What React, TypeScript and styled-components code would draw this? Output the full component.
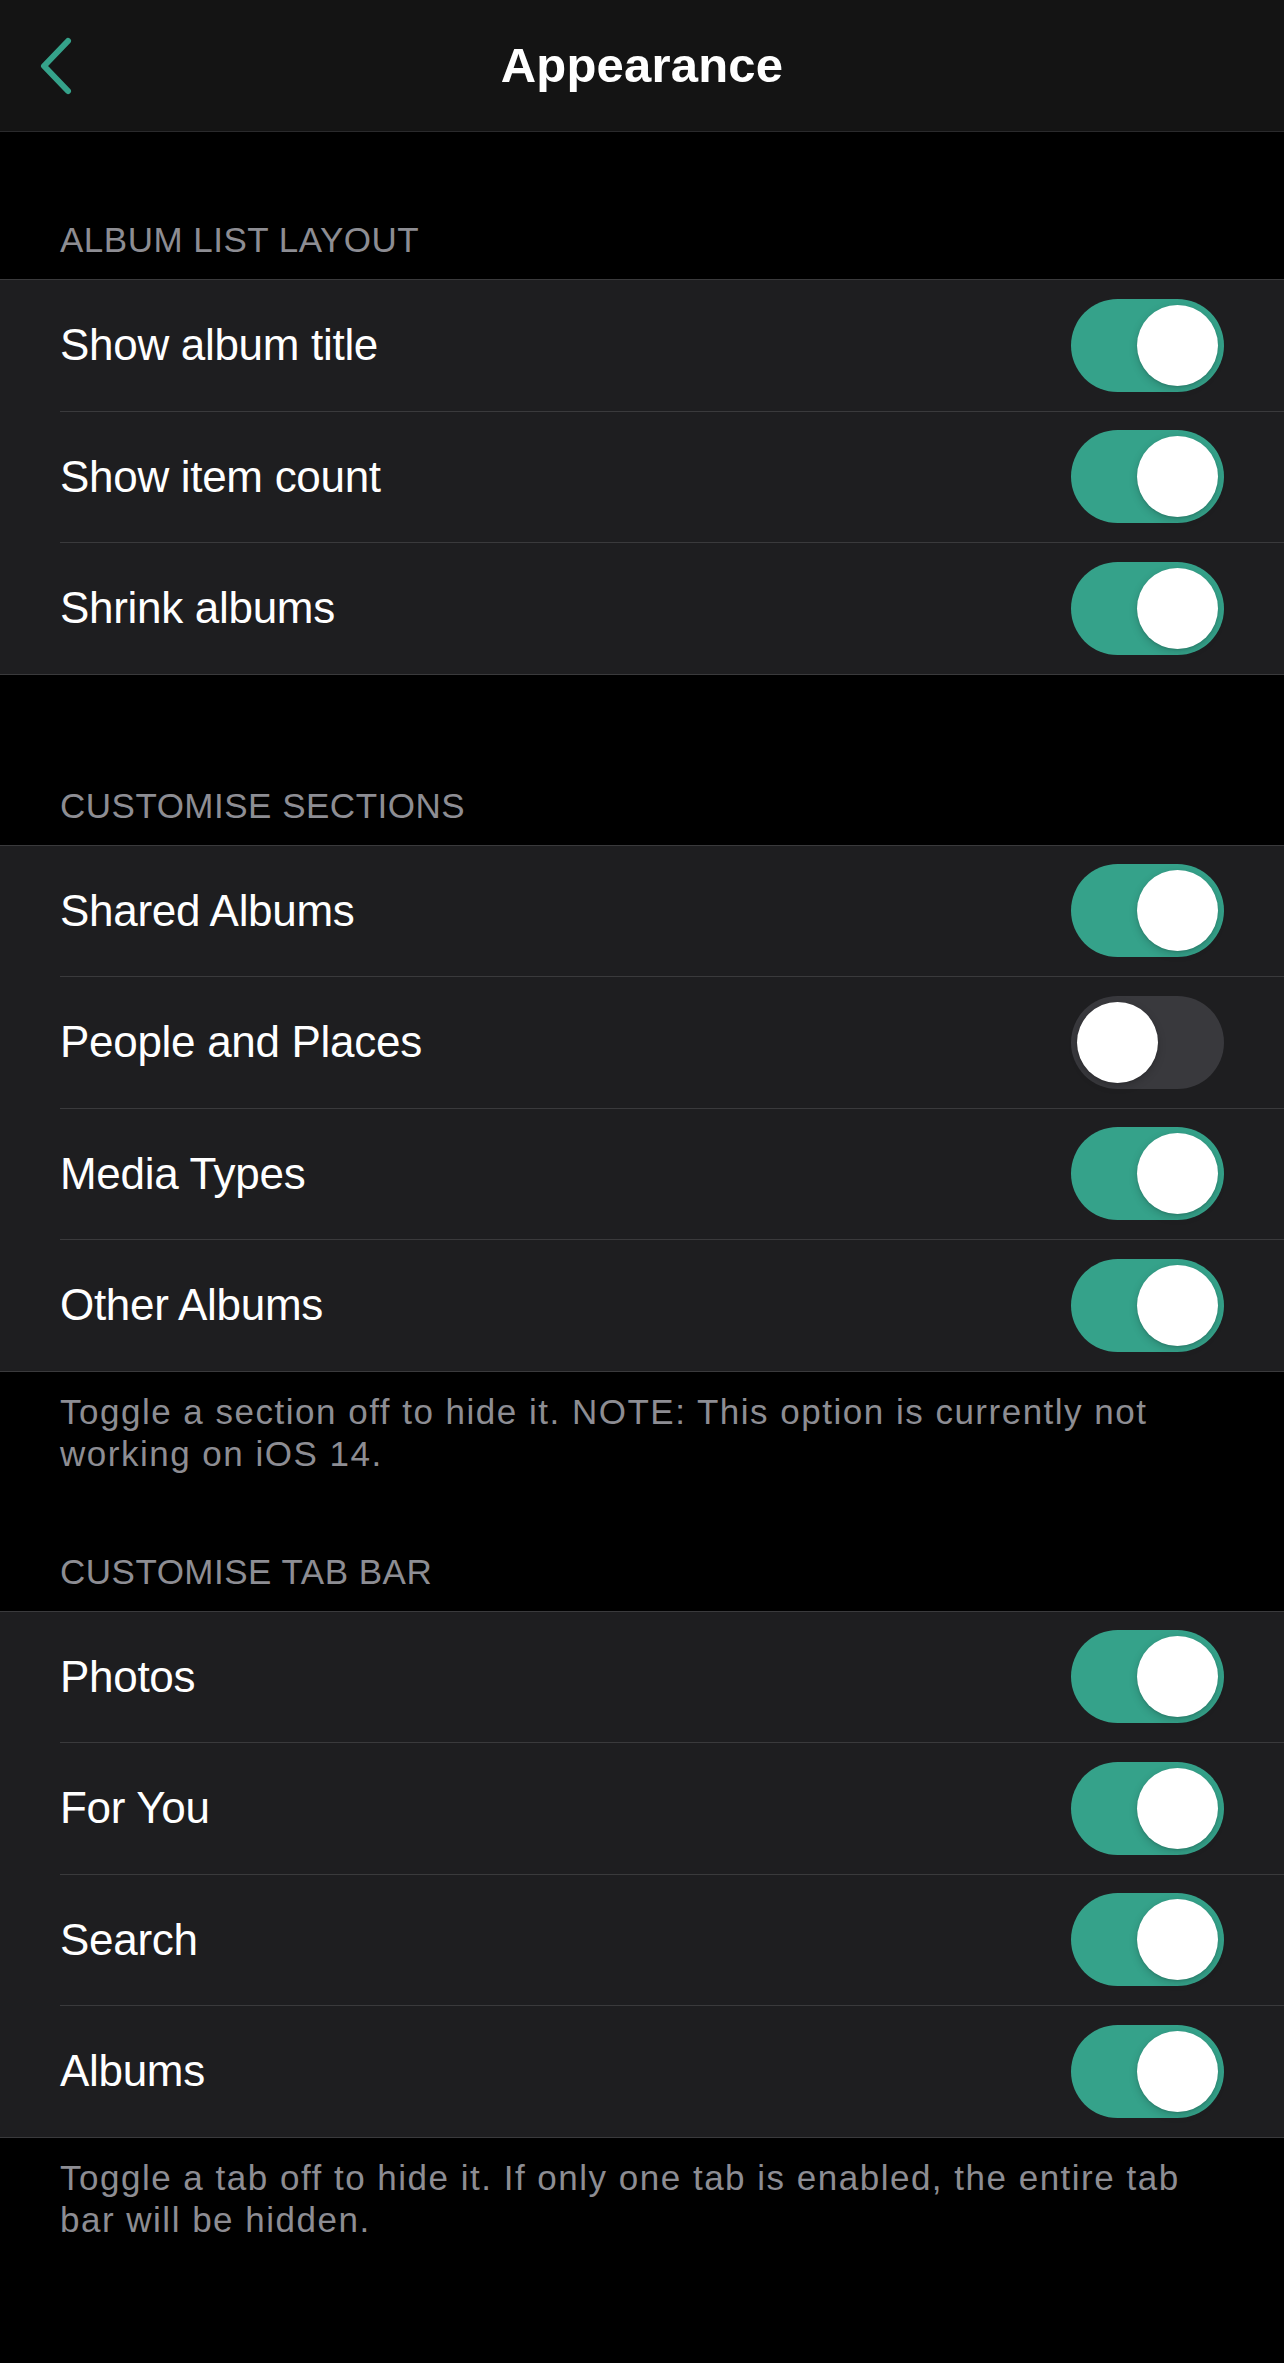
import React, { useState } from 'react';
import styled, { createGlobalStyle } from 'styled-components';

const GlobalStyle = createGlobalStyle`
  html, body {
    margin: 0;
    padding: 0;
    background: #000000;
  }
  body {
    font-family: 'Liberation Sans', Arial, sans-serif;
    -webkit-font-smoothing: antialiased;
  }
`;

const Page = styled.div`
  width: 1284px;
  min-height: 2363px;
  background: #000000;
  color: #ffffff;
`;

const NavBar = styled.header`
  display: grid;
  grid-template-columns: 1fr auto 1fr;
  align-items: center;
  height: 131px;
  background: #141414;
  border-bottom: 1px solid #2a2a2c;
`;

const BackButton = styled.button`
  justify-self: start;
  display: flex;
  align-items: center;
  padding: 0 0 0 36px;
  margin: 0;
  border: none;
  background: none;
  cursor: pointer;
`;

const Title = styled.h1`
  margin: 0;
  font-size: 49px;
  line-height: 1;
  font-weight: 700;
  color: #ffffff;
  letter-spacing: 0.2px;
`;

const Section = styled.section<{ $top: number }>`
  padding-top: ${({ $top }) => $top}px;
`;

const SectionHeader = styled.h2`
  margin: 0;
  padding: 0 60px 18px;
  font-size: 35px;
  line-height: 42px;
  font-weight: 400;
  letter-spacing: 0.5px;
  color: #8d8d93;
  text-transform: uppercase;
`;

const Group = styled.div`
  background: #1e1e20;
  border-top: 1px solid #3a3a3c;
  border-bottom: 1px solid #3a3a3c;
`;

const Row = styled.div`
  display: flex;
  align-items: center;
  justify-content: space-between;
  height: 130.5px;
  padding: 0 60px;
`;

const RowLabel = styled.span`
  font-size: 44px;
  line-height: 1;
  letter-spacing: -0.3px;
  color: #ffffff;
`;

const Divider = styled.div`
  height: 1px;
  margin-left: 60px;
  background: #3a3a3c;
`;

const Footer = styled.p`
  margin: 0;
  padding: 19px 60px 0;
  font-size: 35px;
  line-height: 42px;
  letter-spacing: 1.5px;
  color: #8d8d93;
`;

const Track = styled.button<{ $on: boolean }>`
  position: relative;
  width: 153px;
  height: 93px;
  padding: 0;
  border: none;
  border-radius: 46.5px;
  background: ${({ $on }) => ($on ? '#35a28a' : '#39393d')};
  cursor: pointer;
  transition: background 0.2s ease;
  flex-shrink: 0;
`;

const Knob = styled.span<{ $on: boolean }>`
  position: absolute;
  top: 6px;
  left: ${({ $on }) => ($on ? '66px' : '6px')};
  width: 81px;
  height: 81px;
  border-radius: 50%;
  background: #ffffff;
  box-shadow: 0 3px 8px rgba(0, 0, 0, 0.18), 0 1px 2px rgba(0, 0, 0, 0.12);
  transition: left 0.2s ease;
`;

interface ToggleProps {
  on: boolean;
  onChange: () => void;
}

const Toggle: React.FC<ToggleProps> = ({ on, onChange }) => (
  <Track $on={on} onClick={onChange} role="switch" aria-checked={on}>
    <Knob $on={on} />
  </Track>
);

type SectionData = {
  title: string;
  top: number;
  items: { label: string; on: boolean }[];
  footer?: string;
};

const sections: SectionData[] = [
  {
    title: 'Album List Layout',
    top: 87,
    items: [
      { label: 'Show album title', on: true },
      { label: 'Show item count', on: true },
      { label: 'Shrink albums', on: true },
    ],
  },
  {
    title: 'Customise Sections',
    top: 110,
    items: [
      { label: 'Shared Albums', on: true },
      { label: 'People and Places', on: false },
      { label: 'Media Types', on: true },
      { label: 'Other Albums', on: true },
    ],
    footer: 'Toggle a section off to hide it. NOTE: This option is currently not working on iOS 14.',
  },
  {
    title: 'Customise Tab Bar',
    top: 76,
    items: [
      { label: 'Photos', on: true },
      { label: 'For You', on: true },
      { label: 'Search', on: true },
      { label: 'Albums', on: true },
    ],
    footer: 'Toggle a tab off to hide it. If only one tab is enabled, the entire tab bar will be hidden.',
  },
];

export default function App() {
  const [state, setState] = useState(() =>
    sections.map((s) => s.items.map((i) => i.on))
  );

  const flip = (si: number, ii: number) => {
    setState((prev) =>
      prev.map((row, r) => (r === si ? row.map((v, c) => (c === ii ? !v : v)) : row))
    );
  };

  return (
    <Page>
      <GlobalStyle />
      <NavBar>
        <BackButton aria-label="Back">
          <svg width="40" height="64" viewBox="0 0 40 64" fill="none">
            <path
              d="M32 7 L8 32 L32 57"
              stroke="#35a28a"
              strokeWidth="6"
              strokeLinecap="round"
              strokeLinejoin="round"
            />
          </svg>
        </BackButton>
        <Title>Appearance</Title>
        <div />
      </NavBar>

      {sections.map((section, si) => (
        <Section key={section.title} $top={section.top}>
          <SectionHeader>{section.title}</SectionHeader>
          <Group>
            {section.items.map((item, ii) => (
              <React.Fragment key={item.label}>
                {ii > 0 && <Divider />}
                <Row>
                  <RowLabel>{item.label}</RowLabel>
                  <Toggle on={state[si][ii]} onChange={() => flip(si, ii)} />
                </Row>
              </React.Fragment>
            ))}
          </Group>
          {section.footer && <Footer>{section.footer}</Footer>}
        </Section>
      ))}
    </Page>
  );
}
